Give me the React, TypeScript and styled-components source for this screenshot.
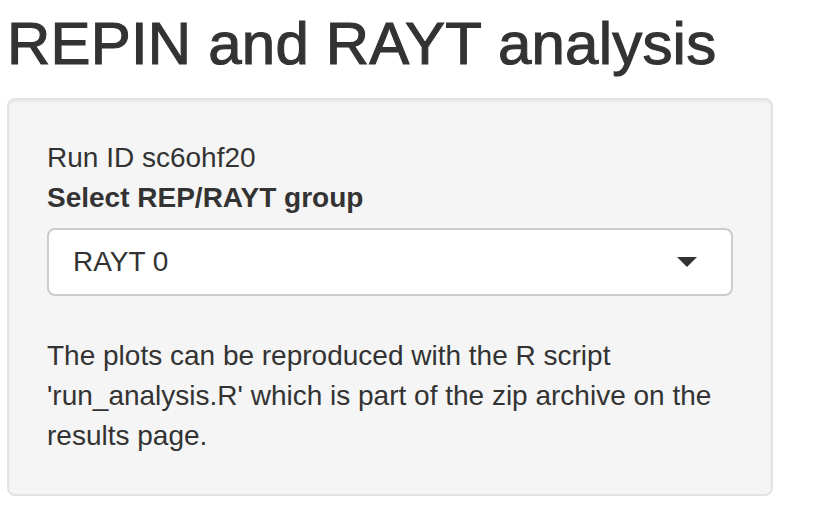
import React from "react";
import styled, { createGlobalStyle } from "styled-components";

const GlobalStyle = createGlobalStyle`
  html, body {
    margin: 0;
    padding: 0;
    background: #ffffff;
  }
  body {
    font-family: "Liberation Sans", Arial, Helvetica, sans-serif;
    font-size: 28px;
    line-height: 40px;
    color: #333333;
  }
  * { box-sizing: border-box; }
`;

const Page = styled.div`
  display: flex;
  flex-direction: column;
  width: 766px;
  margin-left: 7px;
`;

const Title = styled.h2`
  margin: 11px 0 21px 0;
  font-size: 60px;
  line-height: 66px;
  font-weight: 500;
  letter-spacing: 0.2px;
  color: #333333;
  -webkit-text-stroke: 1.1px #333333;
`;

const Well = styled.div`
  display: flex;
  flex-direction: column;
  padding: 38px;
  background: #f5f5f5;
  border: 2px solid #e3e3e3;
  border-radius: 8px;
  box-shadow: inset 0 2px 2px rgba(0, 0, 0, 0.05);
`;

const InfoText = styled.div`
  font-size: 28px;
  line-height: 40px;
`;

const FormGroup = styled.div`
  display: flex;
  flex-direction: column;
  margin-bottom: 40px;
`;

const Label = styled.label`
  font-weight: 700;
  margin-bottom: 10px;
`;

const SelectBox = styled.div`
  display: flex;
  align-items: center;
  justify-content: space-between;
  height: 68px;
  padding: 0 34px 0 24px;
  background: #ffffff;
  border: 2px solid #cccccc;
  border-radius: 8px;
  font-size: 28px;
  line-height: 40px;
  color: #333333;
`;

const Caret = styled.span`
  width: 0;
  height: 0;
  border-style: solid;
  border-width: 10px 10px 0 10px;
  border-color: #333333 transparent transparent transparent;
`;

const Paragraph = styled.p`
  margin: 0;
  font-size: 28px;
  line-height: 40px;
`;

export default function App() {
  return (
    <>
      <GlobalStyle />
      <Page>
        <Title>REPIN and RAYT analysis</Title>
        <Well>
          <InfoText>Run ID sc6ohf20</InfoText>
          <FormGroup>
            <Label>Select REP/RAYT group</Label>
            <SelectBox>
              <span>RAYT 0</span>
              <Caret />
            </SelectBox>
          </FormGroup>
          <Paragraph>
            The plots can be reproduced with the R script 'run_analysis.R' which
            is part of the zip archive on the results page.
          </Paragraph>
        </Well>
      </Page>
    </>
  );
}
